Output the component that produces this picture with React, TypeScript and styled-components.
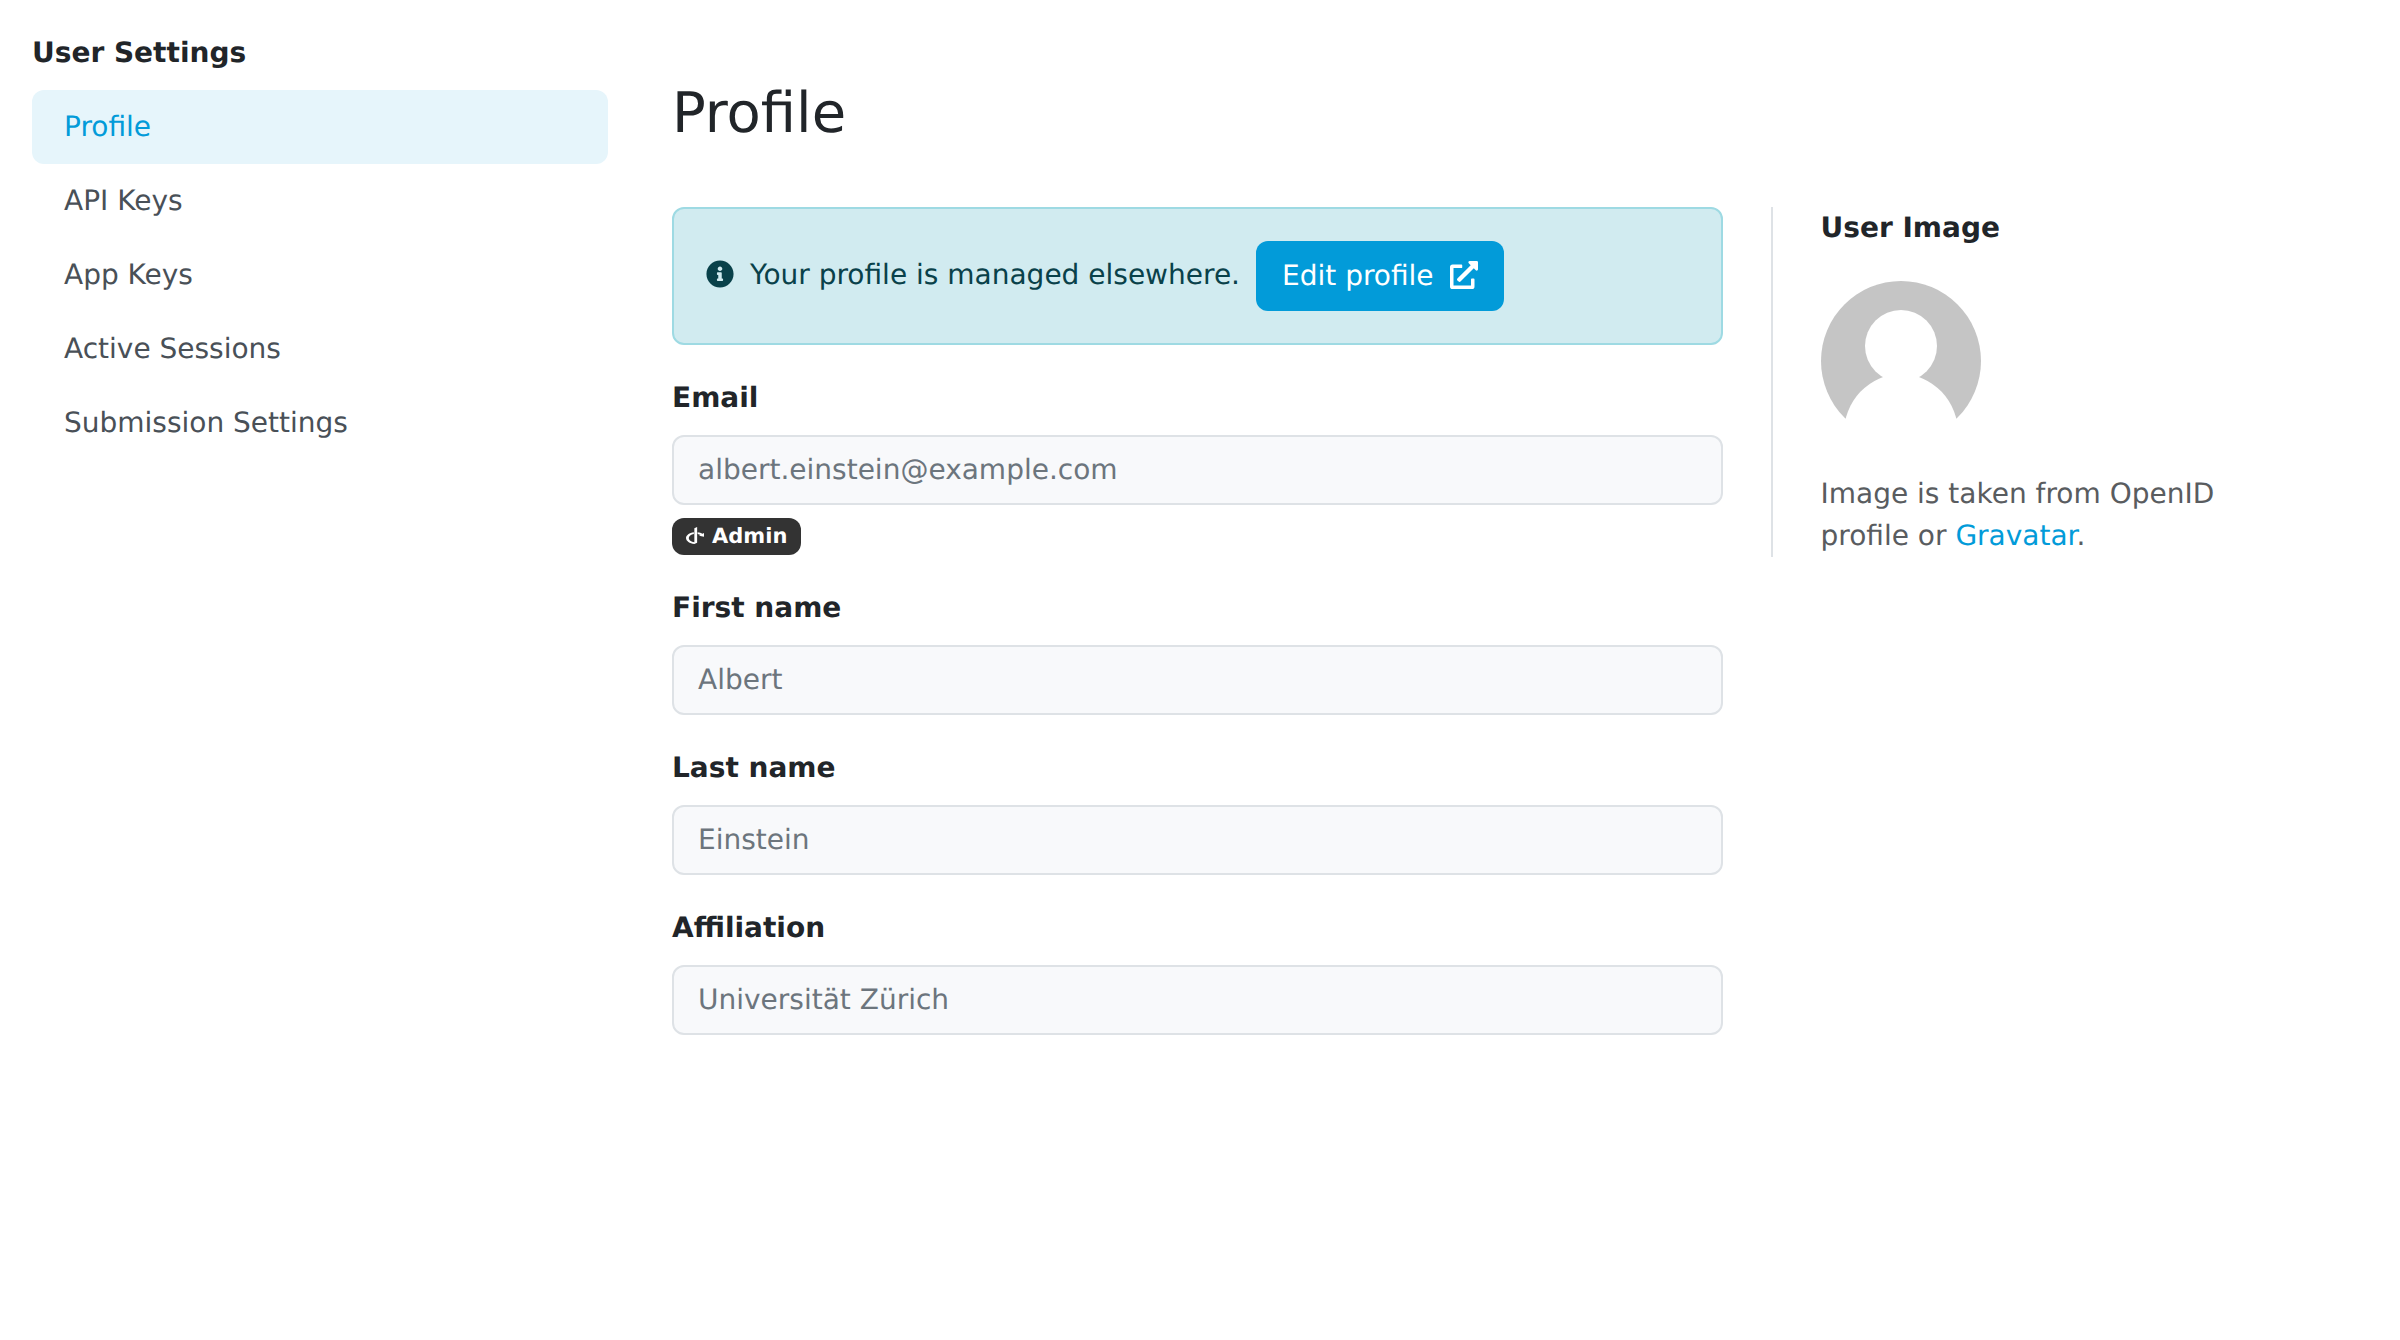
import React from "react";
import styled, { createGlobalStyle } from "styled-components";
import { FaExternalLinkAlt, FaInfoCircle, FaOpenid } from "react-icons/fa";

const GlobalStyle = createGlobalStyle`
  *, *::before, *::after { box-sizing: border-box; }
  body {
    margin: 0;
    background: #fff;
    color: #212529;
    font-family: "DejaVu Sans", sans-serif;
    font-size: 28px;
    line-height: 42px;
    text-rendering: geometricPrecision;
  }
`;

const Page = styled.div`
  display: flex;
  gap: 64px;
  min-height: 1340px;
  padding: 32px;
`;

const Sidebar = styled.nav`
  width: 576px;
  flex: none;
`;

const SidebarTitle = styled.div`
  margin-bottom: 16px;
  font-weight: 700;
`;

const NavItem = styled.a<{ $active?: boolean }>`
  display: block;
  padding: 16px 32px;
  border-radius: 12px;
  color: ${(p) => (p.$active ? "#029bd9" : "#495057")};
  background: ${(p) => (p.$active ? "#e6f5fb" : "transparent")};
  text-decoration: none;
`;

const Main = styled.main`
  flex: 1;
  padding-top: 48px;
`;

const Heading = styled.h1`
  margin: 0 0 60px;
  font-size: 56px;
  font-weight: 400;
  line-height: 67px;
`;

const Columns = styled.div`
  display: flex;
  align-items: flex-start;
  gap: 48px;
`;

const Form = styled.div`
  display: flex;
  flex-direction: column;
  gap: 32px;
  width: 1051px;
`;

const Alert = styled.div`
  display: flex;
  align-items: center;
  height: 138px;
  padding: 0 32px;
  border: 2px solid #9edae3;
  border-radius: 12px;
  background: #d1ebf0;
  color: #09414a;
`;

const InfoIcon = styled(FaInfoCircle)`
  flex: none;
  margin-bottom: 5px;
`;

const AlertText = styled.span`
  margin: 0 16px 2px;
  white-space: nowrap;
`;

const EditButton = styled.a`
  display: flex;
  align-items: center;
  justify-content: space-between;
  width: 248px;
  height: 70px;
  padding: 0 26px;
  border-radius: 12px;
  background: #029bd9;
  color: #fff;
  white-space: nowrap;
`;

const ExternalIcon = styled(FaExternalLinkAlt)`
  flex: none;
  margin-bottom: 3px;
`;

const Label = styled.div`
  margin-bottom: 16px;
  font-weight: 700;
`;

const Control = styled.div`
  height: 70px;
  padding: 12px 24px;
  border: 2px solid #dee2e6;
  border-radius: 12px;
  background: #f8f9fb;
  color: #6c757d;
`;

const Badge = styled.span`
  display: flex;
  align-items: center;
  gap: 8px;
  width: 129px;
  height: 37px;
  margin-top: 13px;
  padding: 0 13.65px;
  border-radius: 12px;
  background: #333;
  color: #fff;
  font-size: 21px;
  font-weight: 700;
  line-height: 21px;

  svg {
    flex: none;
    width: 18.4px;
    height: 21px;
    margin-bottom: 3px;
  }
`;

const ImagePanel = styled.aside`
  width: 500px;
  padding-left: 48px;
  border-left: 2px solid #dee2e6;
`;

const PanelTitle = styled.div`
  margin-left: -0.5px;
  font-weight: 700;
`;

const Avatar = styled.svg`
  display: block;
  width: 160px;
  height: 160px;
  margin: 32px 0;
`;

const Hint = styled.p`
  margin: 0 0 0 -0.5px;
  color: #595c5f;
`;

const Link = styled.a`
  color: #029bd9;
`;

const navItems = ["Profile", "API Keys", "App Keys", "Active Sessions", "Submission Settings"];

interface FieldProps {
  label: string;
  value: string;
  children?: React.ReactNode;
}

function Field({ label, value, children }: FieldProps) {
  return (
    <div>
      <Label>{label}</Label>
      <Control>{value}</Control>
      {children}
    </div>
  );
}

export default function App() {
  return (
    <>
      <GlobalStyle />
      <Page>
        <Sidebar>
          <SidebarTitle>User Settings</SidebarTitle>
          {navItems.map((item, i) => (
            <NavItem key={item} $active={i === 0}>
              {item}
            </NavItem>
          ))}
        </Sidebar>
        <Main>
          <Heading>Profile</Heading>
          <Columns>
            <Form>
              <Alert>
                <InfoIcon size={28} />
                <AlertText>Your profile is managed elsewhere.</AlertText>
                <EditButton>
                  Edit profile
                  <ExternalIcon size={28} />
                </EditButton>
              </Alert>
              <Field label="Email" value="albert.einstein@example.com">
                <Badge>
                  <FaOpenid />
                  Admin
                </Badge>
              </Field>
              <Field label="First name" value="Albert" />
              <Field label="Last name" value="Einstein" />
              <Field label="Affiliation" value="Universität Zürich" />
            </Form>
            <ImagePanel>
              <PanelTitle>User Image</PanelTitle>
              <Avatar viewBox="0 0 160 160">
                <circle cx="80" cy="80" r="80" fill="#c5c5c5" />
                <circle cx="80" cy="65" r="36" fill="#fff" />
                <ellipse cx="80" cy="154" rx="57.5" ry="61" fill="#fff" />
              </Avatar>
              <Hint>
                Image is taken from OpenID profile or <Link>Gravatar</Link>.
              </Hint>
            </ImagePanel>
          </Columns>
        </Main>
      </Page>
    </>
  );
}
